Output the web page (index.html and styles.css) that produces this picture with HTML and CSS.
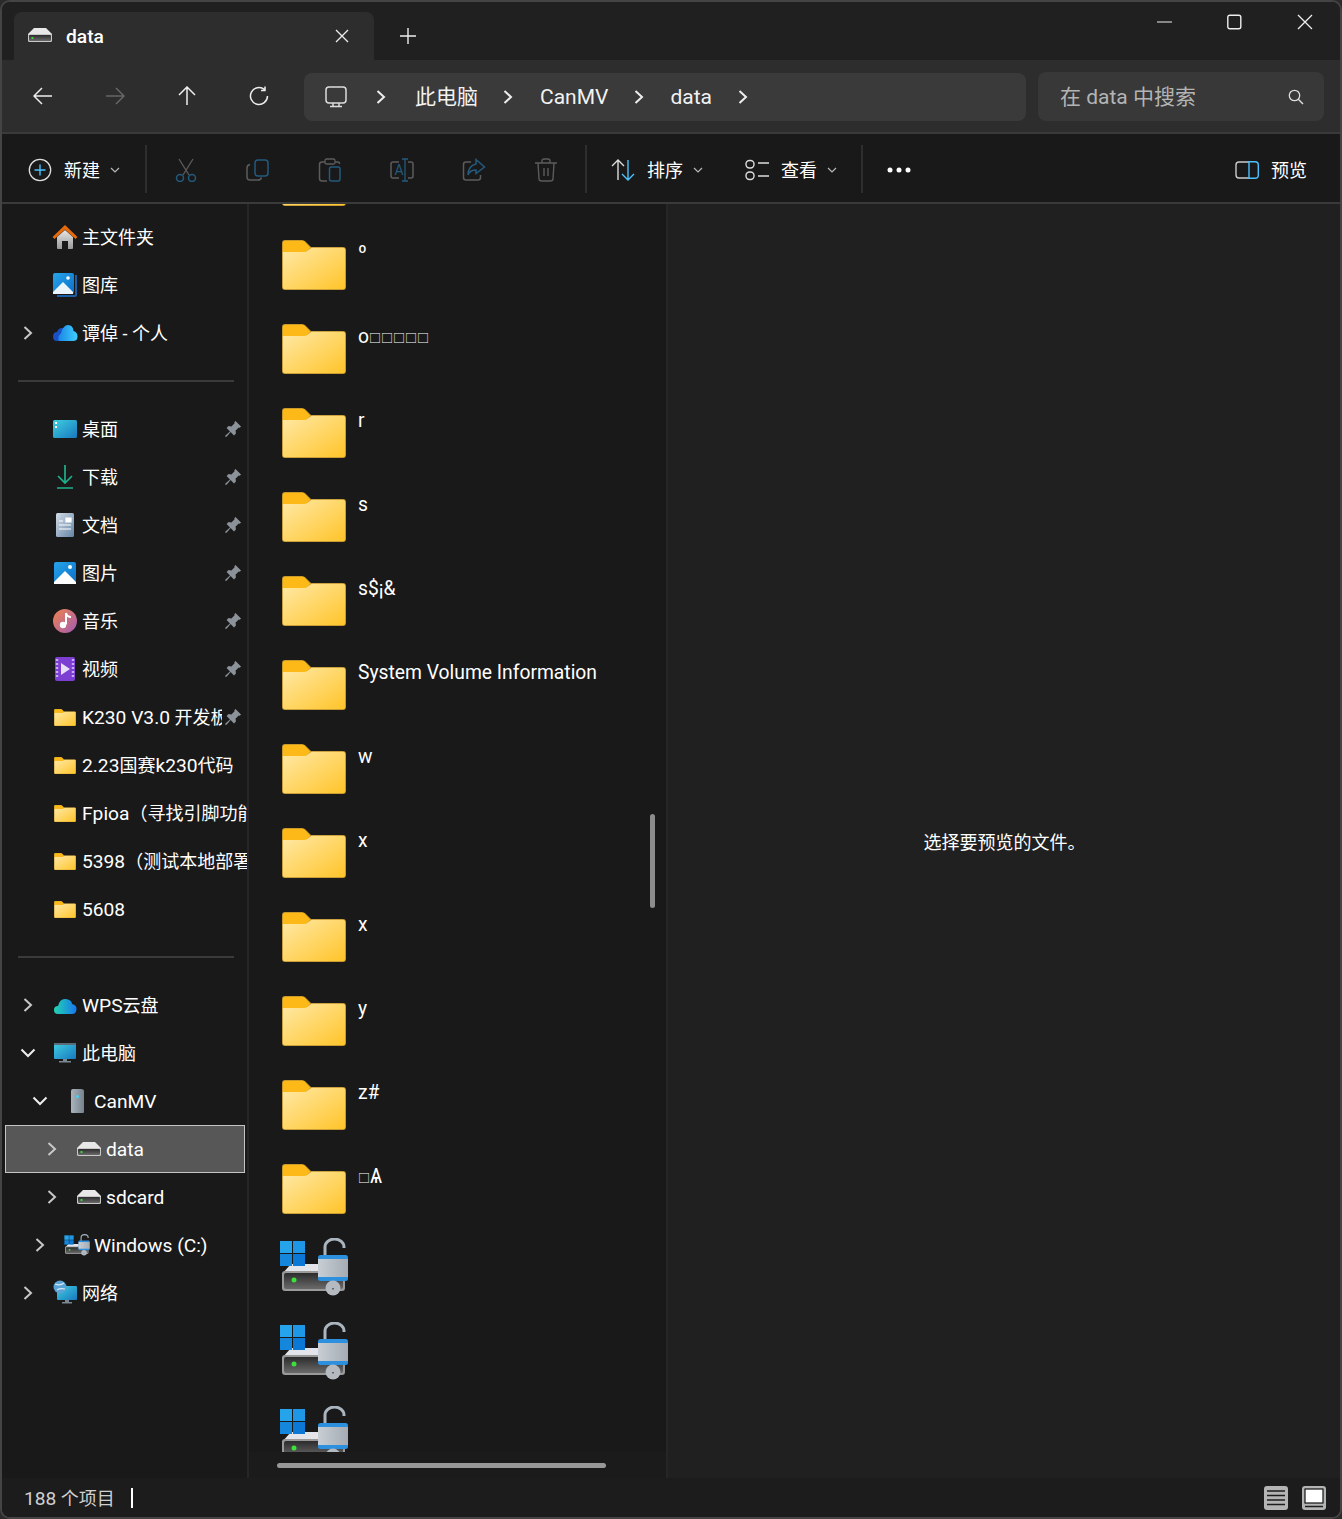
FILE: index.html
```html
<!DOCTYPE html>
<html lang="zh-CN">
<head>
    <meta charset="UTF-8">
    <meta name="viewport" content="width=device-width, initial-scale=1.0">
    <title>data - 文件资源管理器</title>
    <link rel="stylesheet" href="styles.css">
</head>
<body>
    <!-- Shared icons -->
    <svg class="sprite" xmlns="http://www.w3.org/2000/svg">
        <defs>
            <linearGradient id="g-folder" x1="0" y1="0" x2="1" y2="1"><stop offset="0" stop-color="#ffe9a6"/><stop offset="1" stop-color="#ffc42a"/></linearGradient>
            <linearGradient id="g-house" x1="0" y1="0" x2="0" y2="1"><stop offset="0" stop-color="#e6e6e6"/><stop offset="1" stop-color="#9a9a9a"/></linearGradient>
            <linearGradient id="g-blue" x1="0" y1="0" x2="1" y2="1"><stop offset="0" stop-color="#27a4ea"/><stop offset="1" stop-color="#0b6fc8"/></linearGradient>
            <linearGradient id="g-cloud" x1="0" y1="0" x2="1" y2="0"><stop offset="0" stop-color="#1a86e6"/><stop offset="1" stop-color="#3fd0fc"/></linearGradient>
            <linearGradient id="g-wps" x1="0" y1="0" x2="1" y2="0"><stop offset="0" stop-color="#22d3b0"/><stop offset="1" stop-color="#1877ee"/></linearGradient>
            <linearGradient id="g-screen" x1="0" y1="0" x2="1" y2="1"><stop offset="0" stop-color="#3fcfe0"/><stop offset="1" stop-color="#1878bf"/></linearGradient>
            <linearGradient id="g-doc" x1="0" y1="0" x2="1" y2="1"><stop offset="0" stop-color="#d3dce6"/><stop offset="1" stop-color="#6585a6"/></linearGradient>
            <linearGradient id="g-music" x1="0" y1="0" x2="1" y2="1"><stop offset="0" stop-color="#f0834c"/><stop offset="1" stop-color="#a25bb5"/></linearGradient>
            <linearGradient id="g-drive" x1="0" y1="0" x2="0" y2="1"><stop offset="0" stop-color="#2c2c2c"/><stop offset="1" stop-color="#6a6a6a"/></linearGradient>
            <linearGradient id="g-lock" x1="0" y1="0" x2="1" y2="0"><stop offset="0" stop-color="#c8ced4"/><stop offset="1" stop-color="#a4abb3"/></linearGradient>
            <linearGradient id="g-tower" x1="0" y1="0" x2="1" y2="0"><stop offset="0" stop-color="#a9b4bd"/><stop offset="1" stop-color="#76828c"/></linearGradient>
        </defs>
        <symbol id="i-folder" viewBox="0 0 64 50">
            <path d="M3 0H20q2 0 3.500 1.500L29 7H61q3 0 3 3V47q0 3-3 3H3q-3 0-3-3V3q0-3 3-3z" fill="#b98f2e"/>
            <path d="M3 .8H20q2 0 3 1.200L28.500 7.800 24 12H.8V3q0-2.200 2.200-2.200z" fill="#fdb917"/>
            <path d="M.8 12H22q2 0 3.500-1.200L29.500 7.800H61q2.200 0 2.200 2.200V47q0 2.200-2.200 2.200H3q-2.200 0-2.200-2.200z" fill="url(#g-folder)"/>
        </symbol>
        <symbol id="i-drive" viewBox="0 0 24 14">
            <path d="M6 0H18L24 6V7H0V6z" fill="#e8e8e8"/>
            <rect x="0" y="6" width="24" height="8" rx="1.500" fill="#c8c8c8"/>
            <rect x="1" y="7" width="22" height="6" rx="1" fill="url(#g-drive)"/>
            <rect x="3.500" y="9" width="2" height="2" fill="#3bd13b"/>
        </symbol>
        <symbol id="i-lockdrive" viewBox="0 0 70 58">
            <path d="M12 26H60V50H3V36z" fill="#e3e5ea"/>
            <rect x="3" y="33" width="63" height="20" rx="3" fill="#9a9a9a"/>
            <rect x="5" y="35" width="59" height="16" rx="2" fill="url(#g-drive)"/>
            <circle cx="15" cy="42" r="2.500" fill="#3be03b"/>
            <rect x="1" y="3" width="12" height="12" fill="#25a4ec"/>
            <rect x="14" y="3" width="12" height="12" fill="#1d97e6"/>
            <rect x="1" y="16" width="12" height="12" fill="#1487dc"/>
            <rect x="14" y="16" width="12" height="12" fill="#0a78d4"/>
            <path d="M46 20V9a9.500 8 0 0 1 19 0v1" fill="none" stroke="#aab5c0" stroke-width="3"/>
            <rect x="39" y="17" width="30" height="26" rx="2.500" fill="#2d90de"/>
            <rect x="39" y="21" width="30" height="18" fill="url(#g-lock)"/>
            <circle cx="54" cy="50" r="7.500" fill="#b4bac0"/>
            <rect x="53" y="50" width="2" height="1.500" fill="#666"/>
        </symbol>
        <symbol id="i-pin" viewBox="0 0 16 16">
            <path d="M10.500 0L16 5.500 14.800 6.700 13.800 6.400 10.600 9.600 10.900 12.500 9 14.400 5.600 11 1.600 15.800 .2 15.800 .4 14.400 5 10.400 1.600 7 3.500 5.100 6.400 5.400 9.600 2.200 9.300 1.200z" fill="#8b9299"/>
        </symbol>
        <symbol id="i-right" viewBox="0 0 10 14">
            <path d="M1.500 1L8 7 1.500 13" fill="none" stroke="currentColor" stroke-width="2"/>
        </symbol>
        <symbol id="i-down" viewBox="0 0 16 10">
            <path d="M1.500 1.500L8 8 14.500 1.500" fill="none" stroke="currentColor" stroke-width="2"/>
        </symbol>
        <symbol id="i-caret" viewBox="0 0 10 6">
            <path d="M1 1L5 5 9 1" fill="none" stroke="#b8b8b8" stroke-width="1.200"/>
        </symbol>
    </svg>

    <div class="window">
        <!-- Title bar with tabs -->
        <header class="titlebar">
            <div class="tab">
                <svg class="tab-icon"><use href="#i-drive"/></svg>
                <span class="tab-title lat">data</span>
                <svg class="tab-close" viewBox="0 0 14 14"><path d="M1 1L13 13M13 1L1 13" stroke="#eee" stroke-width="1.300"/></svg>
            </div>
            <svg class="tab-add" viewBox="0 0 16 16"><path d="M8 0V16M0 8H16" stroke="#eee" stroke-width="1.400"/></svg>
            <div class="win-controls">
                <button class="win-btn"><svg viewBox="0 0 16 16"><path d="M0 8H15" stroke="#eee" stroke-width="1.200"/></svg></button>
                <button class="win-btn"><svg viewBox="0 0 16 16"><rect x=".8" y="1.200" width="13" height="13.600" rx="2" fill="none" stroke="#eee" stroke-width="1.400"/></svg></button>
                <button class="win-btn"><svg viewBox="0 0 16 16"><path d="M1 1L15 15M15 1L1 15" stroke="#eee" stroke-width="1.300"/></svg></button>
            </div>
        </header>

        <!-- Navigation and address -->
        <nav class="addressbar">
            <div class="nav-buttons">
                <svg class="nav-icon" viewBox="0 0 20 20"><path d="M19 10H1M9 2L1 10 9 18" fill="none" stroke="#eee" stroke-width="1.500"/></svg>
                <svg class="nav-icon" viewBox="0 0 20 20"><path d="M1 10H19M11 2L19 10 11 18" fill="none" stroke="#666" stroke-width="1.500"/></svg>
                <svg class="nav-icon" viewBox="0 0 20 20"><path d="M10 19V1M2 9L10 1 18 9" fill="none" stroke="#eee" stroke-width="1.500"/></svg>
                <svg class="nav-icon" viewBox="0 0 20 20"><path d="M15.500 3.500A8.500 8.500 0 1 0 18.500 10M16 .5V4.500H12" fill="none" stroke="#eee" stroke-width="1.500"/></svg>
            </div>
            <div class="breadcrumb">
                <svg class="crumb-pc" viewBox="0 0 22 22"><rect x="1" y="1" width="20" height="16" rx="3" fill="none" stroke="#ddd" stroke-width="1.500"/><path d="M8 17V20M14 17V20M5 20.500H17" stroke="#ddd" stroke-width="1.500"/></svg>
                <svg class="crumb-arrow"><use href="#i-right"/></svg>
                <span class="crumb-cjk">此电脑</span>
                <svg class="crumb-arrow"><use href="#i-right"/></svg>
                <span class="crumb-lat crumb-canmv">CanMV</span>
                <svg class="crumb-arrow"><use href="#i-right"/></svg>
                <span class="crumb-lat">data</span>
                <svg class="crumb-arrow"><use href="#i-right"/></svg>
            </div>
            <div class="search">
                <span>在 <span class="crumb-lat">data</span> 中搜索</span>
                <svg class="search-icon" viewBox="0 0 16 16"><circle cx="6.500" cy="6.500" r="5.200" fill="none" stroke="#ddd" stroke-width="1.300"/><path d="M10.300 10.300L15 15" stroke="#ddd" stroke-width="1.400"/></svg>
            </div>
        </nav>

        <!-- Command bar -->
        <div class="toolbar">
            <div class="tool tool-new">
                <svg class="tool-icon" viewBox="0 0 24 24"><circle cx="12" cy="12" r="10.700" fill="none" stroke="#ddd" stroke-width="1.300"/><path d="M12 6.500V17.500M6.500 12H17.500" stroke="#4cc2ff" stroke-width="1.400"/></svg>
                <span>新建</span>
                <svg class="caret"><use href="#i-caret"/></svg>
            </div>
            <div class="tool-sep"></div>
            <div class="tool-group">
                <svg class="tool-icon" viewBox="0 0 24 24"><path d="M5 1L15 17M19 1L9 17" stroke="#5c5c5c" stroke-width="1.300"/><circle cx="6" cy="20" r="3.500" fill="none" stroke="#235a7e" stroke-width="1.500"/><circle cx="18" cy="20" r="3.500" fill="none" stroke="#235a7e" stroke-width="1.500"/></svg>
                <svg class="tool-icon" viewBox="0 0 24 24"><path d="M4 6.500Q1 7 1 10V19Q1 22 4 22H12Q15 22 15.500 19.500" fill="none" stroke="#5c5c5c" stroke-width="1.500"/><rect x="9" y="2" width="13" height="16" rx="3" fill="none" stroke="#235a7e" stroke-width="1.500"/></svg>
                <svg class="tool-icon" viewBox="0 0 24 24"><path d="M7 4H4Q1.500 4 1.500 6.500V20.500Q1.500 23 4 23H9M17 4H20Q21.500 4 21.500 6" fill="none" stroke="#5c5c5c" stroke-width="1.500"/><rect x="7" y="1" width="10" height="5" rx="1.500" fill="none" stroke="#5c5c5c" stroke-width="1.300"/><rect x="11.500" y="9" width="10.500" height="14" rx="2" fill="none" stroke="#235a7e" stroke-width="1.500"/></svg>
                <svg class="tool-icon tool-rename" viewBox="0 0 24 24"><path d="M9 4H3Q1 4 1 6V18Q1 20 3 20H9M18 4H21Q23 4 23 6V18Q23 20 21 20H18" fill="none" stroke="#5c5c5c" stroke-width="1.500"/><path d="M12 1H18M15 1V23M12 23H18" fill="none" stroke="#235a7e" stroke-width="1.300"/><text x="4.500" y="17" class="rename-letter">A</text></svg>
                <svg class="tool-icon" viewBox="0 0 24 24"><path d="M9 4H4Q1.500 4 1.500 6.500V19.500Q1.500 22 4 22H16Q18.500 22 18.500 19.500V17" fill="none" stroke="#5c5c5c" stroke-width="1.500"/><path d="M14 1.500L22.500 9 14 15.500V12Q8 12 6 17Q6 8 14 6z" fill="none" stroke="#235a7e" stroke-width="1.500"/></svg>
                <svg class="tool-icon" viewBox="0 0 24 24"><path d="M1 5H23M8 5V3Q8 1 10 1H14Q16 1 16 3V5M4 5L5 21Q5 23 8 23H16Q19 23 19 21L20 5M10 10V18M14 10V18" fill="none" stroke="#5c5c5c" stroke-width="1.400"/></svg>
            </div>
            <div class="tool-sep tool-sep-b"></div>
            <div class="tool tool-sort">
                <svg class="tool-icon" viewBox="0 0 24 24"><path d="M7 22V2M1 8L7 2 13 8" fill="none" stroke="#ddd" stroke-width="1.400"/><path d="M17 2V22M11 16L17 22 23 16" fill="none" stroke="#4cc2ff" stroke-width="1.400"/></svg>
                <span>排序</span>
                <svg class="caret"><use href="#i-caret"/></svg>
            </div>
            <div class="tool tool-view">
                <svg class="tool-icon" viewBox="0 0 24 24"><rect x="1" y="2.500" width="8" height="7.500" rx="3.500" fill="none" stroke="#ddd" stroke-width="1.400"/><rect x="1" y="14" width="8" height="7.500" rx="3.500" fill="none" stroke="#ddd" stroke-width="1.400"/><path d="M13 5H24M13 18H24" stroke="#ddd" stroke-width="1.400"/></svg>
                <span>查看</span>
                <svg class="caret"><use href="#i-caret"/></svg>
            </div>
            <div class="tool-sep tool-sep-c"></div>
            <svg class="tool-more" viewBox="0 0 24 6"><circle cx="3" cy="3" r="2.500" fill="#fff"/><circle cx="12" cy="3" r="2.500" fill="#fff"/><circle cx="21" cy="3" r="2.500" fill="#fff"/></svg>
            <div class="tool tool-preview">
                <svg class="tool-icon" viewBox="0 0 24 18"><path d="M14 1H4Q1 1 1 4V14Q1 17 4 17H14" fill="none" stroke="#ccc" stroke-width="1.400"/><path d="M14 .7H20Q23.300 .7 23.300 4V14Q23.300 17.300 20 17.300H14z" fill="none" stroke="#4cc2ff" stroke-width="1.400"/></svg>
                <span>预览</span>
            </div>
        </div>

        <main class="main">
            <!-- Navigation pane -->
            <aside class="sidebar">
                <div class="row"><span class="twist"></span>
                    <svg class="row-icon" viewBox="0 0 26 26"><path d="M5 13L13 6 21 13V24Q21 25 20 25H16V17H10V25H6Q5 25 5 24z" fill="url(#g-house)"/><path d="M13 1L25.500 13 23.500 15 13 5.500 2.500 15 .5 13z" fill="#e56b0c"/></svg>
                    <span class="label">主文件夹</span></div>
                <div class="row"><span class="twist"></span>
                    <svg class="row-icon" viewBox="0 0 26 26"><path d="M23 3H25V23Q25 25 23 25H5V23H23z" fill="#1a5fa8"/><rect x="1" y="1" width="21" height="21" rx="2" fill="url(#g-blue)"/><path d="M1 20L11 10 21 20V22H1z" fill="#eaf5fd"/><circle cx="16" cy="6" r="1.800" fill="#fff"/></svg>
                    <span class="label">图库</span></div>
                <div class="row"><span class="twist"><svg class="chev"><use href="#i-right"/></svg></span>
                    <svg class="row-icon" viewBox="0 0 26 26"><path d="M5 21Q1 21 1 16.500T5 12Q6.500 8 10 8T15 11Q8 12 8 21z" fill="#1b4fc4"/><path d="M7 21Q5 16 9 13.500Q11 5 16 5T21.500 11Q25.500 12 25.500 16.500T21 21z" fill="url(#g-cloud)"/></svg>
                    <span class="label">谭倬 - 个人</span></div>
                <div class="side-sep"></div>

                <div class="row"><span class="twist"></span>
                    <svg class="row-icon" viewBox="0 0 26 26"><rect x="1" y="4" width="24" height="18" rx="1.500" fill="url(#g-screen)"/><rect x="3" y="6" width="2" height="2" fill="#fff"/><rect x="3" y="10" width="2" height="2" fill="#fff"/></svg>
                    <span class="label">桌面</span><svg class="pin"><use href="#i-pin"/></svg></div>
                <div class="row"><span class="twist"></span>
                    <svg class="row-icon" viewBox="0 0 26 26"><path d="M13 1V19M6 12L13 19 20 12M5 24H21" fill="none" stroke="#1fb28a" stroke-width="1.700"/></svg>
                    <span class="label">下载</span><svg class="pin"><use href="#i-pin"/></svg></div>
                <div class="row"><span class="twist"></span>
                    <svg class="row-icon" viewBox="0 0 26 26"><rect x="4" y="1" width="18" height="24" rx="1.500" fill="url(#g-doc)"/><path d="M7 9H11M7 13H19M7 17H19M14 6H19V10H14z" stroke="#fff" stroke-width="1.200" fill="#fff"/></svg>
                    <span class="label">文档</span><svg class="pin"><use href="#i-pin"/></svg></div>
                <div class="row"><span class="twist"></span>
                    <svg class="row-icon" viewBox="0 0 26 26"><rect x="2" y="2" width="22" height="22" rx="2" fill="url(#g-blue)"/><path d="M2 22L13 11 24 22V24H2z" fill="#fff"/><circle cx="18" cy="7" r="2" fill="#fff"/></svg>
                    <span class="label">图片</span><svg class="pin"><use href="#i-pin"/></svg></div>
                <div class="row"><span class="twist"></span>
                    <svg class="row-icon" viewBox="0 0 26 26"><circle cx="13" cy="13" r="12" fill="url(#g-music)"/><path d="M14 5V16.500" stroke="#fff" stroke-width="2"/><path d="M14 5Q15 9 19 9" fill="none" stroke="#fff" stroke-width="2"/><circle cx="11" cy="17" r="3.200" fill="#fff"/></svg>
                    <span class="label">音乐</span><svg class="pin"><use href="#i-pin"/></svg></div>
                <div class="row"><span class="twist"></span>
                    <svg class="row-icon" viewBox="0 0 26 26"><rect x="3" y="1" width="20" height="24" rx="2" fill="#7d3fd1"/><path d="M5 3V23M21 3V23" stroke="#c9a9f2" stroke-width="2.400" stroke-dasharray="2 2"/><path d="M9 7L18 13 9 19z" fill="#e8e0f8"/></svg>
                    <span class="label">视频</span><svg class="pin"><use href="#i-pin"/></svg></div>
                <div class="row"><span class="twist"></span>
                    <svg class="row-icon row-icon-folder"><use href="#i-folder"/></svg>
                    <span class="label"><span class="lat">K230 V3.0</span> 开发板</span><svg class="pin"><use href="#i-pin"/></svg></div>
                <div class="row"><span class="twist"></span>
                    <svg class="row-icon row-icon-folder"><use href="#i-folder"/></svg>
                    <span class="label"><span class="lat">2.23</span>国赛<span class="lat">k230</span>代码</span></div>
                <div class="row"><span class="twist"></span>
                    <svg class="row-icon row-icon-folder"><use href="#i-folder"/></svg>
                    <span class="label"><span class="lat">Fpioa</span>（寻找引脚功能）</span></div>
                <div class="row"><span class="twist"></span>
                    <svg class="row-icon row-icon-folder"><use href="#i-folder"/></svg>
                    <span class="label"><span class="lat">5398</span>（测试本地部署）</span></div>
                <div class="row"><span class="twist"></span>
                    <svg class="row-icon row-icon-folder"><use href="#i-folder"/></svg>
                    <span class="label lat">5608</span></div>
                <div class="side-sep"></div>

                <div class="row"><span class="twist"><svg class="chev"><use href="#i-right"/></svg></span>
                    <svg class="row-icon" viewBox="0 0 26 26"><path d="M6 22Q2 22 2 18T6 14Q8 6 14 7T20 12Q25 13 24.500 17.500T20 22z" fill="url(#g-wps)"/></svg>
                    <span class="label"><span class="lat">WPS</span>云盘</span></div>
                <div class="row"><span class="twist"><svg class="chev-down"><use href="#i-down"/></svg></span>
                    <svg class="row-icon" viewBox="0 0 26 26"><rect x="2" y="3" width="22" height="16" rx="1" fill="url(#g-screen)"/><path d="M2 4Q2 3 3 3H23Q24 3 24 4V5H2z" fill="#5b6b78"/><path d="M11 19H15V21H19V22.500H7V21H11z" fill="#7b8790"/></svg>
                    <span class="label">此电脑</span></div>
                <div class="row depth-1"><span class="twist"><svg class="chev-down"><use href="#i-down"/></svg></span>
                    <svg class="row-icon" viewBox="0 0 26 26"><path d="M7 3Q7 1 9 1H17Q20 1 20 3V24Q20 25 19 25H8Q7 25 7 24z" fill="url(#g-tower)"/><rect x="12" y="7" width="3" height="3" rx="1.500" fill="#43d4f0"/></svg>
                    <span class="label lat">CanMV</span></div>
                <div class="row depth-2 row-selected"><span class="twist"><svg class="chev"><use href="#i-right"/></svg></span>
                    <svg class="row-icon row-icon-drive"><use href="#i-drive"/></svg>
                    <span class="label lat">data</span></div>
                <div class="row depth-2"><span class="twist"><svg class="chev"><use href="#i-right"/></svg></span>
                    <svg class="row-icon row-icon-drive"><use href="#i-drive"/></svg>
                    <span class="label lat">sdcard</span></div>
                <div class="row depth-1"><span class="twist"><svg class="chev"><use href="#i-right"/></svg></span>
                    <svg class="row-icon"><use href="#i-lockdrive"/></svg>
                    <span class="label lat">Windows (C:)</span></div>
                <div class="row"><span class="twist"><svg class="chev"><use href="#i-right"/></svg></span>
                    <svg class="row-icon" viewBox="0 0 26 26"><rect x="5" y="6" width="20" height="14" rx="1" fill="url(#g-screen)"/><path d="M13 20H17V22H20V23.500H10V22H13z" fill="#7b8790"/><circle cx="8" cy="7" r="6.500" fill="#5aa3d6"/><path d="M3 4Q8 6 12 3M5 10Q8 8 13 9" fill="none" stroke="#d6e8f4" stroke-width="1.200"/></svg>
                    <span class="label">网络</span></div>
            </aside>

            <!-- File list -->
            <section class="files">
                <div class="file-scroll">
                    <div class="file-list">
                        <div class="file"><svg class="folder"><use href="#i-folder"/></svg><span class="file-name"></span></div>
                        <div class="file"><svg class="folder"><use href="#i-folder"/></svg><span class="file-name">º</span></div>
                        <div class="file"><svg class="folder"><use href="#i-folder"/></svg><span class="file-name">o<span class="box">□□□□□</span></span></div>
                        <div class="file"><svg class="folder"><use href="#i-folder"/></svg><span class="file-name">r</span></div>
                        <div class="file"><svg class="folder"><use href="#i-folder"/></svg><span class="file-name">s</span></div>
                        <div class="file"><svg class="folder"><use href="#i-folder"/></svg><span class="file-name">s$¡&amp;</span></div>
                        <div class="file"><svg class="folder"><use href="#i-folder"/></svg><span class="file-name">System Volume Information</span></div>
                        <div class="file"><svg class="folder"><use href="#i-folder"/></svg><span class="file-name">w</span></div>
                        <div class="file"><svg class="folder"><use href="#i-folder"/></svg><span class="file-name">x</span></div>
                        <div class="file"><svg class="folder"><use href="#i-folder"/></svg><span class="file-name">x</span></div>
                        <div class="file"><svg class="folder"><use href="#i-folder"/></svg><span class="file-name">y</span></div>
                        <div class="file"><svg class="folder"><use href="#i-folder"/></svg><span class="file-name">z#</span></div>
                        <div class="file"><svg class="folder"><use href="#i-folder"/></svg><span class="file-name"><span class="box">□</span>Ѧ</span></div>
                        <div class="file"><svg class="lockdrive"><use href="#i-lockdrive"/></svg></div>
                        <div class="file"><svg class="lockdrive"><use href="#i-lockdrive"/></svg></div>
                        <div class="file"><svg class="lockdrive"><use href="#i-lockdrive"/></svg></div>
                    </div>
                </div>
                <div class="hscroll"><div class="hscroll-thumb"></div></div>
                <div class="vscroll-thumb"></div>
            </section>

            <!-- Preview pane -->
            <section class="preview">选择要预览的文件。</section>
        </main>

        <!-- Status bar -->
        <footer class="statusbar">
            <span class="status-text"><span class="lat">188</span> 个项目</span>
            <span class="status-bar-mark"></span>
            <div class="view-toggle">
                <svg class="view-btn" viewBox="0 0 24 24"><rect width="24" height="24" rx="3" fill="#b4b4b4"/><path d="M3 5H21M3 9.500H21M3 14H21M3 18.500H21" stroke="#1c1c1c" stroke-width="1.300"/></svg>
                <svg class="view-btn" viewBox="0 0 24 24"><rect width="24" height="24" rx="3" fill="#b4b4b4"/><rect x="3" y="3" width="18" height="14" fill="#fff" stroke="#111" stroke-width="1.200"/><path d="M3 20.500H21" stroke="#1c1c1c" stroke-width="1.300"/></svg>
            </div>
        </footer>
    </div>
</body>
</html>
```

FILE: styles.css
```css
/* Reset and basic styles */
* {
    margin: 0;
    padding: 0;
    box-sizing: border-box;
}

html, body {
    width: 1342px;
    height: 1519px;
    overflow: hidden;
}

body {
    font-family: Roboto, "Noto Sans CJK SC", sans-serif;
    font-size: 18px;
    line-height: 24px;
    background-color: #2b2b2b;
    color: white;
}

/* Latin runs sit a bit larger than the CJK text next to them */
.lat {
    font-size: 19.2px;
}

.sprite {
    display: block;
    width: 0;
    height: 0;
}

/* Window frame */
.window {
    display: flex;
    flex-direction: column;
    width: 1342px;
    height: 1519px;
    border: 2px solid #444;
    border-radius: 10px;
    overflow: hidden;
    background-color: #202020;
}

/* Title bar */
.titlebar {
    display: flex;
    align-items: flex-end;
    flex: none;
    height: 58px;
    padding-left: 12px;
    background-color: #202020;
}

.tab {
    display: flex;
    align-items: center;
    width: 360px;
    height: 48px;
    padding: 0 25px 0 14px;
    border-radius: 8px 8px 0 0;
    background-color: #2d2d2d;
}

.tab-icon {
    width: 24px;
    height: 14px;
    margin-top: -2px;
}

.tab-title {
    margin-left: 14px;
    padding-top: 2px;
    font-weight: 500;
}

.tab-close {
    width: 14px;
    height: 14px;
    margin-left: auto;
}

.tab-add {
    width: 16px;
    height: 16px;
    margin: 0 0 16px 26px;
}

.win-controls {
    display: flex;
    align-self: flex-start;
    margin-left: auto;
}

.win-btn {
    display: flex;
    align-items: center;
    justify-content: center;
    width: 70px;
    height: 40px;
    background: none;
    border: none;
}

.win-btn svg {
    width: 16px;
    height: 16px;
}

/* Address row */
.addressbar {
    display: flex;
    align-items: center;
    flex: none;
    height: 74px;
    padding: 2px 16px 0 31px;
    border-bottom: 2px solid #3a3a3a;
    background-color: #2d2d2d;
    font-size: 21px;
}

.nav-buttons {
    display: flex;
    gap: 52px;
    width: 271px;
    margin-top: -2px;
}

.nav-icon {
    width: 20px;
    height: 20px;
}

.breadcrumb {
    display: flex;
    align-items: center;
    gap: 26px;
    width: 722px;
    height: 48px;
    padding-left: 21px;
    border-radius: 8px;
    background-color: #3a3a3a;
    color: #f2f2f2;
}

.crumb-pc {
    width: 22px;
    height: 22px;
    margin-right: 3px;
}

.crumb-cjk {
    margin: 0 -1px 0 3px;
}

.crumb-lat {
    font-size: 21px;
}

.crumb-canmv {
    margin-left: 1px;
}

.crumb-arrow {
    width: 10px;
    height: 14px;
    color: #eee;
}

.search {
    display: flex;
    align-items: center;
    justify-content: space-between;
    width: 286px;
    height: 49px;
    margin: -1px 0 0 12px;
    padding: 0 20px 0 22px;
    border-radius: 8px;
    background-color: #383838;
    color: #b4b4b4;
}

.search-icon {
    width: 16px;
    height: 16px;
}

/* Command bar */
.toolbar {
    display: flex;
    align-items: center;
    flex: none;
    height: 70px;
    padding: 4px 33px 0 26px;
    border-bottom: 2px solid #3a3a3a;
    background-color: #191919;
}

.tool {
    display: flex;
    align-items: center;
}

.tool-icon {
    flex: none;
    width: 24px;
    height: 24px;
}

.tool span {
    margin-left: 12px;
    padding-top: 2px;
}

.caret {
    width: 10px;
    height: 6px;
    margin-left: 10px;
}

.tool-sep {
    flex: none;
    width: 2px;
    height: 48px;
    margin-top: -2px;
    margin-left: 25px;
    background-color: #2e2e2e;
}

.tool-group {
    display: flex;
    gap: 48px;
    margin-left: 27px;
}

.tool-sep-b {
    margin-left: 27px;
}

.tool-sort {
    margin-left: 24px;
}

.tool-view {
    margin-left: 42px;
}

.tool-sep-c {
    margin-left: 24px;
}

.tool-more {
    width: 24px;
    height: 6px;
    margin-left: 24px;
}

.tool-preview {
    margin-left: auto;
}

.tool-preview .tool-icon {
    height: 18px;
}

.rename-letter {
    font-family: Roboto, sans-serif;
    font-size: 14px;
    fill: #235a7e;
}

/* Main area */
.main {
    display: flex;
    flex: 1;
    min-height: 0;
}

/* Navigation pane */
.sidebar {
    flex: none;
    width: 247px;
    padding-top: 9px;
    border-right: 2px solid #262626;
    background-color: #191919;
    overflow: hidden;
}

.row {
    display: flex;
    align-items: center;
    height: 48px;
    margin-left: 3px;
    padding-left: 11px;
}

.depth-1 {
    padding-left: 23px;
}

.depth-2 {
    padding-left: 35px;
}

.row-selected {
    margin-right: 2px;
    background-color: #575757;
    outline: 1px solid #c4c4c4;
    outline-offset: -1px;
}

.twist {
    display: flex;
    align-items: center;
    justify-content: center;
    flex: none;
    width: 24px;
    height: 24px;
    margin-right: 12px;
}

.chev {
    width: 10px;
    height: 14px;
    color: #c8c8c8;
}

.chev-down {
    width: 16px;
    height: 10px;
    color: #eee;
}

.row-icon {
    flex: none;
    width: 26px;
    height: 26px;
    margin-right: 4px;
}

.row-icon-folder {
    width: 22px;
    height: 17px;
    margin: 0 6px 0 2px;
}

.row-icon-drive {
    height: 14px;
}

.label {
    flex: 1;
    min-width: 0;
    padding-top: 2px;
    white-space: nowrap;
    overflow: hidden;
}

.pin {
    flex: none;
    width: 16px;
    height: 16px;
    margin: 0 6px 0 3px;
}

.side-sep {
    width: 216px;
    height: 2px;
    margin: 23px 0 23px 16px;
    background-color: #3a3a3a;
}

/* File list */
.files {
    position: relative;
    display: flex;
    flex-direction: column;
    flex: none;
    width: 419px;
    border-right: 2px solid #262626;
    background-color: #191919;
}

.file-scroll {
    flex: 1;
    min-height: 0;
    overflow: hidden;
}

.file-list {
    margin-top: -56px;
}

.file {
    display: flex;
    align-items: flex-start;
    height: 84px;
    padding: 8px 0 0 33px;
}

.folder {
    flex: none;
    width: 64px;
    height: 50px;
}

.file-name {
    margin-left: 12px;
    padding-top: 1px;
    font-size: 19.3px;
    white-space: nowrap;
}

.box {
    font-size: 12px;
}

.lockdrive {
    flex: none;
    width: 70px;
    height: 58px;
    margin: -10px 0 0 -3px;
}

.hscroll {
    flex: none;
    height: 26px;
    padding: 11px 0 0 28px;
    background-color: #1b1b1b;
}

.hscroll-thumb {
    width: 329px;
    height: 5px;
    border-radius: 3px;
    background-color: #989898;
}

.vscroll-thumb {
    position: absolute;
    top: 610px;
    left: 401px;
    width: 5px;
    height: 94px;
    border-radius: 3px;
    background-color: #8c8c8c;
}

/* Preview pane */
.preview {
    display: flex;
    align-items: center;
    justify-content: center;
    flex: 1;
    padding: 3px 0 0 1px;
    background-color: #202020;
}

/* Status bar */
.statusbar {
    display: flex;
    align-items: center;
    flex: none;
    height: 39px;
    padding: 0 14px 0 22px;
    background-color: #1c1c1c;
    color: #d0d0d0;
}

.status-text {
    padding-top: 2px;
}

.status-bar-mark {
    width: 2px;
    height: 20px;
    margin-left: 16px;
    background-color: #fff;
}

.view-toggle {
    display: flex;
    gap: 14px;
    margin-left: auto;
}

.view-btn {
    width: 24px;
    height: 24px;
}
```
